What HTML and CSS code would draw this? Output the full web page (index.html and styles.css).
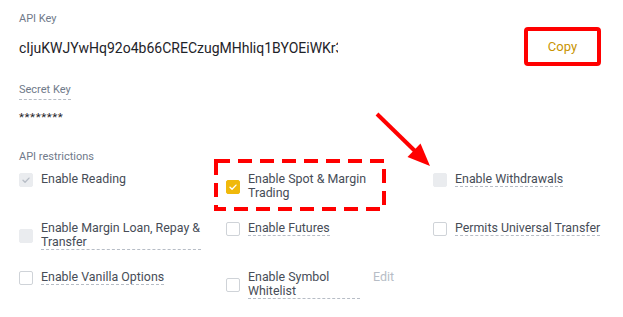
FILE: index.html
```html
<!DOCTYPE html>
<html lang="en">
<head>
  <meta charset="UTF-8">
  <title>API Key</title>
  <link rel="stylesheet" href="styles.css">
</head>
<body>
  <div class="panel">
    <!-- API key -->
    <div class="label">API Key</div>
    <div class="key-row">
      <div class="key">cIjuKWJYwHq92o4b66CRECzugMHhliq1BYOEiWKr3</div>
      <button class="copy">Copy</button>
    </div>

    <!-- Secret key -->
    <div class="label secret">Secret Key</div>
    <div class="stars">********</div>

    <!-- Restrictions -->
    <div class="label restrict">API restrictions</div>
    <div class="options">
      <div class="opt">
        <span class="box checked-off"><svg viewBox="0 0 14 14"><path d="M3.5 7.2l2.4 2.4 4.6-4.8" /></svg></span>
        <span class="text plain">Enable Reading</span>
      </div>
      <div class="opt">
        <span class="box checked"><svg viewBox="0 0 14 14"><path d="M3.5 7.2l2.4 2.4 4.6-4.8" /></svg></span>
        <span class="text plain">Enable Spot &amp; Margin Trading</span>
      </div>
      <div class="opt">
        <span class="box off"></span>
        <span class="text">Enable Withdrawals</span>
      </div>

      <div class="opt">
        <span class="box off"></span>
        <span class="text">Enable Margin Loan, Repay &amp; Transfer</span>
      </div>
      <div class="opt">
        <span class="box"></span>
        <span class="text">Enable Futures</span>
      </div>
      <div class="opt">
        <span class="box"></span>
        <span class="text">Permits Universal Transfer</span>
      </div>

      <div class="opt">
        <span class="box"></span>
        <span class="text">Enable Vanilla Options</span>
      </div>
      <div class="opt">
        <span class="box"></span>
        <span class="text symbol">Enable Symbol Whitelist</span>
        <span class="edit">Edit</span>
      </div>
    </div>
  </div>

  <!-- red annotations drawn over the page -->
  <svg class="marks" width="623" height="317" viewBox="0 0 623 317">
    <rect x="526" y="29" width="73" height="35" rx="2" fill="none" stroke="#ff0000" stroke-width="4" />
    <rect x="216" y="161" width="168" height="48" fill="none" stroke="#ff0000" stroke-width="4" stroke-dasharray="14 8" />
    <line x1="377" y1="114" x2="416" y2="152" stroke="#ff0000" stroke-width="4" />
    <polygon points="430,166 407.5,157 420.5,143.5" fill="#ff0000" />
  </svg>
</body>
</html>
```

FILE: styles.css
```css
/* Reset */
body, html {
  margin: 0;
  padding: 0;
  background-color: #fff;
  font-family: Roboto, "Liberation Sans", sans-serif;
  overflow: hidden;
}

.panel {
  padding: 12px 22px 0 19px;
}

/* Small gray labels */
.label {
  font-size: 11px;
  line-height: 14px;
  color: #707a8a;
}

.label.secret {
  display: inline-block;
  margin-top: 17px;
  padding-bottom: 2px;
  border-bottom: 1px dashed #b7bdc6;
}

.label.restrict {
  margin-top: 26px;
}

/* API key row */
.key-row {
  display: flex;
  align-items: center;
  justify-content: space-between;
  height: 39px;
  margin-top: 1px;
}

.key {
  width: 319px;
  overflow: hidden;
  white-space: nowrap;
  font-size: 14px;
  color: #1e2329;
  padding-top: 3px;
}

.copy {
  width: 77px;
  height: 39px;
  border: none;
  background: #fff;
  color: #c99400;
  font-family: inherit;
  font-size: 13px;
  font-weight: 400;
  padding: 0;
}

.stars {
  margin-top: 10px;
  font-size: 11.5px;
  line-height: 14px;
  color: #1e2329;
  letter-spacing: 0.6px;
}

/* Restriction checkboxes */
.options {
  display: grid;
  grid-template-columns: 207px 207px 207px;
  row-gap: 20px;
  margin-top: 8px;
  align-items: start;
}

.opt {
  display: flex;
  align-items: center;
}

.box {
  width: 12px;
  height: 12px;
  flex: none;
  border: 1px solid #cfd3d8;
  border-radius: 2px;
  margin-right: 8px;
  display: flex;
  align-items: center;
  justify-content: center;
}

.box svg {
  width: 14px;
  height: 14px;
  fill: none;
  stroke-width: 1.6;
  stroke-linecap: round;
  stroke-linejoin: round;
}

.box.off,
.box.checked-off {
  background-color: #eaecef;
  border-color: #eaecef;
}

.box.checked-off svg {
  stroke: #b7bdc6;
}

.box.checked {
  background-color: #f0b90b;
  border-color: #f0b90b;
}

.box.checked svg {
  stroke: #fff;
}

.text {
  display: inline-block;
  max-width: 160px;
  font-size: 12.4px;
  line-height: 14px;
  color: #474d57;
  border-bottom: 1px dashed #b7bdc6;
}

.text.plain {
  border-bottom-color: transparent;
}

.text.symbol {
  width: 112px;
}

.edit {
  margin-left: 13px;
  font-size: 12.4px;
  color: #b7bdc6;
  align-self: flex-start;
  line-height: 14px;
}

/* Annotation layer */
.marks {
  position: absolute;
  top: 0;
  left: 0;
  pointer-events: none;
}
```
